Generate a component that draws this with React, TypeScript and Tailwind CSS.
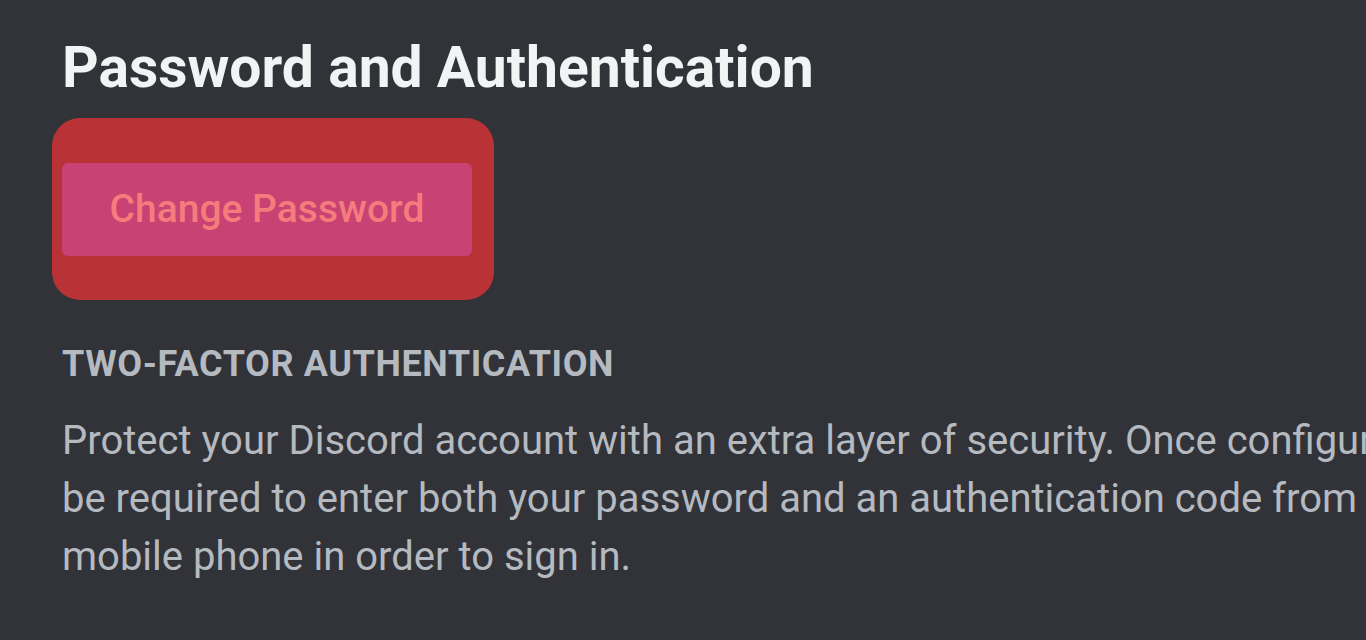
export default function App() {
  return (
    <div
      className="w-[1366px] h-[640px] overflow-hidden bg-[#313338] pl-[62px] pt-[32px]"
      style={{ fontFamily: 'Roboto, "Noto Sans", sans-serif' }}
    >
      <h1 className="text-[57px] leading-[72px] font-bold text-[#f2f3f5] whitespace-nowrap">
        Password and Authentication
      </h1>
      <div className="mt-[14px] -ml-[10px] w-[442px] h-[182px] rounded-[28px] bg-[#b83236] pl-[10px] pt-[45px]">
        <button className="w-[410px] h-[93px] rounded-[6px] bg-[#c84274] text-[39px] font-medium text-[#f57c7c]">
          Change Password
        </button>
      </div>
      <h2 className="mt-[44px] text-[36px] leading-[40px] tracking-[0.6px] font-bold uppercase text-[#b5bac1] whitespace-nowrap">
        Two-Factor Authentication
      </h2>
      <p className="mt-[28px] text-[40px] leading-[58px] text-[#b5bac1] whitespace-nowrap">
        Protect your Discord account with an extra layer of security. Once configured, you'll
        <br />
        be required to enter both your password and an authentication code from your
        <br />
        mobile phone in order to sign in.
      </p>
    </div>
  );
}
